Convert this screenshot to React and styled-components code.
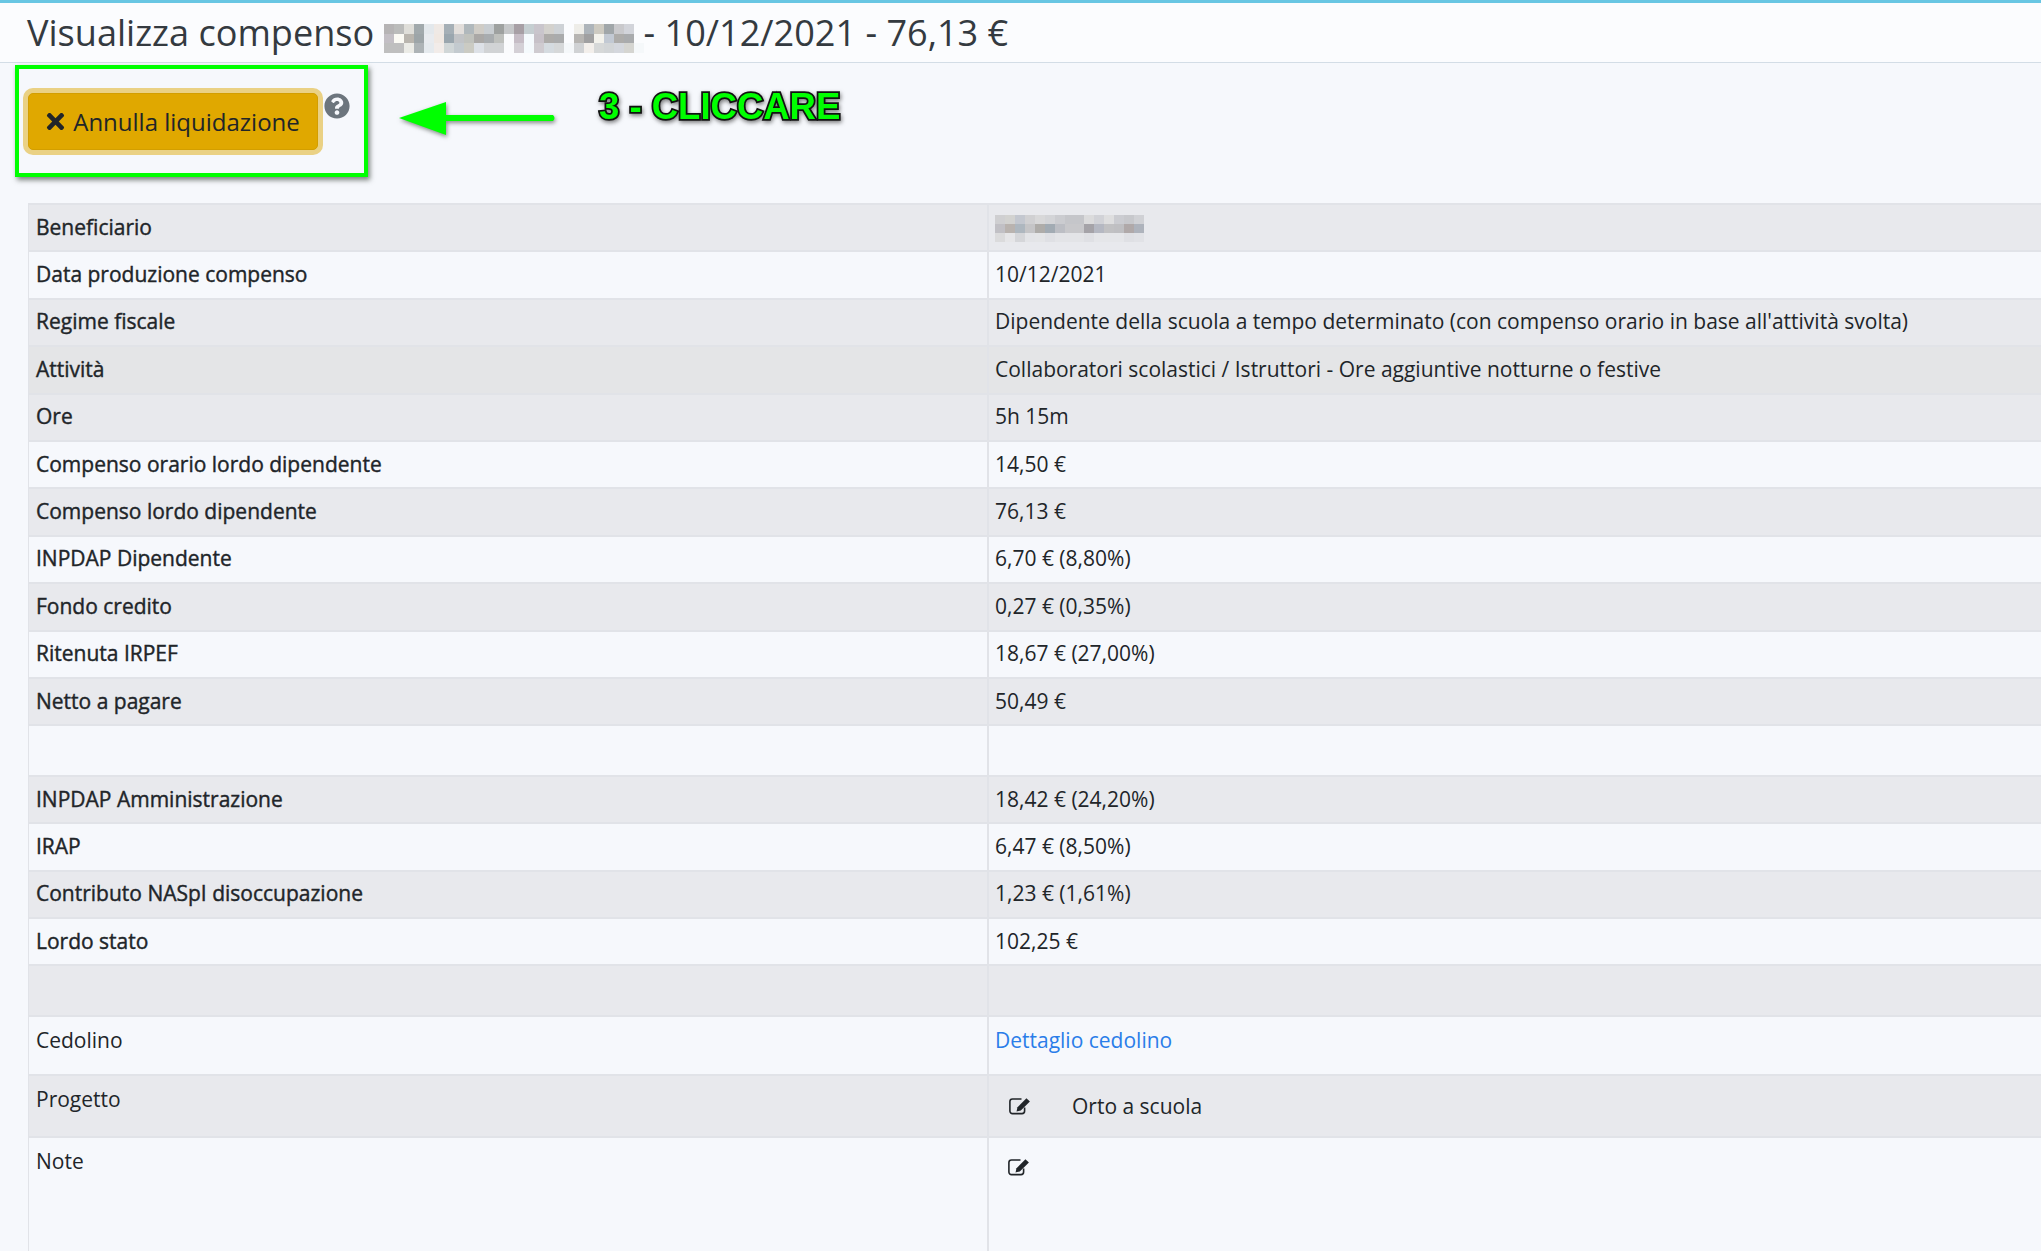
import React from "react";
import styled, { createGlobalStyle } from "styled-components";
import { FaTimes, FaQuestionCircle } from "react-icons/fa";

const GlobalStyle = createGlobalStyle`
  html, body {
    margin: 0;
    background: #f6f8fc;
    overflow: hidden;
  }
  body {
    font-family: "Open Sans", "Liberation Sans", sans-serif;
    color: #212529;
  }
`;

const Page = styled.div`
  width: 2041px;
  height: 1251px;
  overflow: hidden;
  border-top: 3px solid #68c6e3;
  box-sizing: border-box;
`;

const Header = styled.header`
  height: 60px;
  box-sizing: border-box;
  background: #fbfcfe;
  border-bottom: 1px solid #d3dde6;
  padding: 7px 0 0 27px;
`;

const Title = styled.h1`
  margin: 0;
  font-size: 36.1px;
  font-weight: 400;
  line-height: 44px;
  color: #343a40;
  white-space: nowrap;
`;

const Pixels = styled.svg`
  vertical-align: middle;
  display: inline-block;
`;

const TitleCensor = styled.span`
  display: inline-block;
  line-height: 0;
  vertical-align: -2px;
`;

const ActionBar = styled.div`
  display: flex;
  align-items: flex-start;
  padding: 2px 0 0 15px;
`;

const Highlight = styled.div`
  display: flex;
  align-items: flex-start;
  gap: 6px;
  width: 353px;
  height: 112px;
  box-sizing: border-box;
  border: 4px solid #00ff00;
  padding: 24px 0 0 9px;
  box-shadow: 2px 3px 5px rgba(40, 50, 40, 0.6);
`;

const CancelButton = styled.button`
  display: flex;
  align-items: center;
  justify-content: center;
  gap: 5px;
  width: 290px;
  height: 57px;
  padding: 0 3px 0 0;
  background: #e0a800;
  border: 1px solid #d39e00;
  border-radius: 5px;
  box-shadow: 0 0 0 5px rgba(222, 170, 12, 0.5);
  font-family: inherit;
  font-size: 24px;
  color: #212529;
`;

const HelpIcon = styled(FaQuestionCircle)`
  color: #6c757d;
  font-size: 26px;
`;

const Arrow = styled.svg`
  margin: 37px 0 0 31px;
  overflow: visible;
  filter: drop-shadow(1px 2px 2px rgba(40, 50, 40, 0.55));
`;

const Callout = styled.div`
  margin: 21px 0 0 43px;
  font-family: "Liberation Sans", Arial, sans-serif;
  font-weight: 700;
  font-size: 36.5px;
  line-height: 42px;
  white-space: nowrap;
  color: #00ff00;
  -webkit-text-stroke: 3.5px #111;
  paint-order: stroke fill;
  filter: drop-shadow(1px 2px 2px rgba(40, 40, 40, 0.6));
`;

const Table = styled.table`
  margin: 26px 0 0 28px;
  width: 2030px;
  border-collapse: separate;
  border-spacing: 0;
  table-layout: fixed;
  font-size: 21px;
  line-height: 30px;
`;

const Row = styled.tr`
  height: ${(p) => p.$height || 47.4}px;
  background: ${(p) => (p.$hover ? "#e4e5e7" : p.$striped ? "#e8e9ed" : "transparent")};
`;

const Label = styled.td`
  width: 959px;
  box-sizing: border-box;
  padding: ${(p) => (p.$top ? "8px 7px 0" : "0 7px 2px")};
  vertical-align: ${(p) => (p.$top ? "top" : "middle")};
  -webkit-text-stroke: ${(p) => (p.$plain ? "0" : "0.4px")};
  border-left: 1px solid #e1e3e8;
  border-top: 2px solid #e1e3e8;
`;

const Value = styled.td`
  box-sizing: border-box;
  padding: ${(p) => (p.$top ? "8px 6px 0" : "0 6px 2px")};
  vertical-align: ${(p) => (p.$top ? "top" : "middle")};
  border-left: 2px solid #e1e3e8;
  border-top: 2px solid #e1e3e8;
`;

const Link = styled.a`
  color: #2a7de9;
  text-decoration: none;
`;

const EditLine = styled.div`
  display: flex;
  align-items: center;
  gap: 41px;
  padding: ${(p) => p.$pad || "7px 0 0 14px"};
`;

const titleMosaic = [
  "b6b4b5 bbbcbb dfded9 a1a9ac e3e8ec efe9e5 a5afb6 e2dedb b0b8bc cfccc6 c8cdd1 9ea1a0 c5c7c9 a79fa5 c5ced1 c9c5cc d3d1cd ced2d6 fbfcfe eeede8 adb4ba cdcac1 a0a6a9 c9c9cc d2d4da fbfcfe",
  "c3bfc5 fbfaf4 b9b5ae 9da5a8 e8ebef f0e8e2 9aa6ae c1c3c6 c0c2bd aaa8a6 a8acaf bec0bd fafbfd c6bdc6 f5fafd c7c1c8 adaba9 aaabac fbfcfe b7b5b2 a0a0a1 f3f2ec c2c9d3 adacaa a9abad fbfcfe",
  "bfbfbf bfbfbf ebebe6 adb3b6 e5eaee f2ece9 d0d6d7 c3cacf cbcbc3 dde1e7 d1d3d5 d1d3d5 fafbfd d4d0d6 f5fafd cfcbd0 d5dbe0 d6d8d9 f5f8fa d0d2d4 f3efeb d6d8d8 d2d5d7 d4d7dd d5d5d1 f5f8fa",
];

const nameMosaic = [
  "cfcfd1 d2d2d0 c3c7cf d0d0d2 d8d8d9 d3d4d7 cbccd0 c5c6ca c5c6ca dbdbdc d1d2d7 dededf cbccd1 c7c8cc d0d1d5",
  "c1c0c5 b9b3af aeb7bf c5c5c7 aeaca9 a2abb3 bcbec4 c8c8cb c8c8cb a5a3a8 b5b8c2 c1c1c3 bfbfc2 b0a9a9 aeb3bc",
  "dbdbdc e6e6e8 d5d6d9 e3e4e7 e4e5e7 dfe0e4 e3e4e7 e3e4e7 e3e4e7 dfe0e4 e5e6e9 e5e6e9 e5e6e9 dfe0e4 e1e2e6",
];

// censored names in the screenshot, drawn as colour blocks
const Mosaic = ({ rows, cell, height }) => {
  const grid = rows.map((r) => r.split(" "));
  const cols = grid[0].length;
  return (
    <Pixels width={cols * cell} height={grid.length * height} shapeRendering="crispEdges">
      {grid.map((row, y) =>
        row.map((c, x) => (
          <rect key={x + "-" + y} x={x * cell} y={y * height} width={cell} height={height} fill={"#" + c} />
        ))
      )}
    </Pixels>
  );
};

// the old pencil-square icon, not in the icon packages in this weight
const EditIcon = () => (
  <svg width="22" height="18" viewBox="0 0 22 18">
    <path
      d="M12.5 2 H3.5 a2.6 2.6 0 0 0 -2.6 2.6 V14 a2.6 2.6 0 0 0 2.6 2.6 H13 a2.6 2.6 0 0 0 2.6 -2.6 V10.5"
      fill="none"
      stroke="#212529"
      strokeWidth="1.6"
    />
    <path d="M7.5 14.5 L8.5 10.2 L17.4 1.3 L20.9 4.4 L11.8 13.4 Z" fill="#212529" />
  </svg>
);

const rows = [
  ["Data produzione compenso", "10/12/2021"],
  ["Regime fiscale", "Dipendente della scuola a tempo determinato (con compenso orario in base all'attività svolta)"],
  ["Attività", "Collaboratori scolastici / Istruttori - Ore aggiuntive notturne o festive", true],
  ["Ore", "5h 15m"],
  ["Compenso orario lordo dipendente", "14,50 €"],
  ["Compenso lordo dipendente", "76,13 €"],
  ["INPDAP Dipendente", "6,70 € (8,80%)"],
  ["Fondo credito", "0,27 € (0,35%)"],
  ["Ritenuta IRPEF", "18,67 € (27,00%)"],
  ["Netto a pagare", "50,49 €"],
];

const rows2 = [
  ["INPDAP Amministrazione", "18,42 € (24,20%)"],
  ["IRAP", "6,47 € (8,50%)"],
  ["Contributo NASpI disoccupazione", "1,23 € (1,61%)"],
  ["Lordo stato", "102,25 €"],
];

export default function App() {
  return (
    <Page>
      <GlobalStyle />
      <Header>
        <Title>
          Visualizza compenso{" "}
          <TitleCensor>
            <Mosaic rows={titleMosaic} cell={10} height={9.7} />
          </TitleCensor>
          - 10/12/2021 - 76,13 €
        </Title>
      </Header>

      <ActionBar>
        <Highlight>
          <CancelButton>
            <FaTimes size={25} />
            Annulla liquidazione
          </CancelButton>
          <HelpIcon />
        </Highlight>
        <Arrow width="157" height="34" viewBox="0 0 157 34">
          <path d="M0 16 L47 0 L47 13 L154 13 Q157 16 154 19 L47 19 L47 33 Z" fill="#00ff00" />
        </Arrow>
        <Callout>3 - CLICCARE</Callout>
      </ActionBar>

      <Table>
        <tbody>
          <Row $striped>
            <Label>Beneficiario</Label>
            <Value>
              <Mosaic rows={nameMosaic} cell={9.93} height={9} />
            </Value>
          </Row>
          {rows.map(([label, value, hover], i) => (
            <Row key={label} $striped={i % 2 === 1} $hover={hover}>
              <Label>{label}</Label>
              <Value>{value}</Value>
            </Row>
          ))}
          <Row $height={50.6}>
            <Label />
            <Value />
          </Row>
          {rows2.map(([label, value], i) => (
            <Row key={label} $striped={i % 2 === 0}>
              <Label>{label}</Label>
              <Value>{value}</Value>
            </Row>
          ))}
          <Row $striped $height={51}>
            <Label />
            <Value />
          </Row>
          <Row $height={59}>
            <Label $top $plain>Cedolino</Label>
            <Value $top>
              <Link href="#">Dettaglio cedolino</Link>
            </Value>
          </Row>
          <Row $striped $height={62}>
            <Label $top $plain>Progetto</Label>
            <Value $top>
              <EditLine>
                <EditIcon />
                Orto a scuola
              </EditLine>
            </Value>
          </Row>
          <Row $height={140}>
            <Label $top $plain>Note</Label>
            <Value $top>
              <EditLine $pad="12px 0 0 13px">
                <EditIcon />
              </EditLine>
            </Value>
          </Row>
        </tbody>
      </Table>
    </Page>
  );
}
